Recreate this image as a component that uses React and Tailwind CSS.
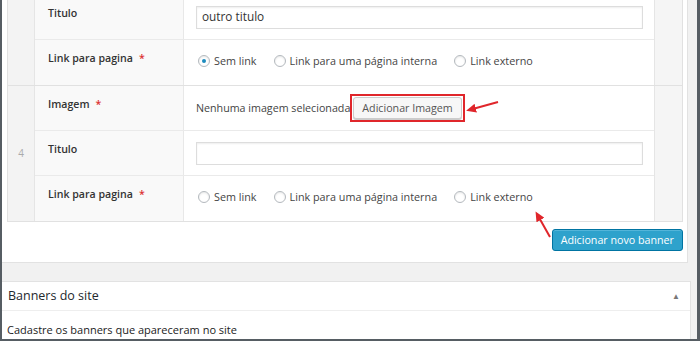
import React from 'react';

const FONT = "font-['Open_Sans',sans-serif]";

function Radio({ checked, label }) {
  return (
    <label className="flex items-center gap-[4px] text-[10.8px] text-[#444]">
      <span className="w-[12px] h-[12px] rounded-full border border-[#b4b9be] bg-white shadow-[inset_0_1px_2px_rgba(0,0,0,0.1)] flex items-center justify-center">
        {checked && <span className="w-[4px] h-[4px] rounded-full bg-[#1e8cbe]" />}
      </span>
      {label}
    </label>
  );
}

function LinkRadios({ first }) {
  return (
    <div className="flex items-center gap-[17px] pl-[14px] mt-[-3px]">
      <Radio checked={first} label="Sem link" />
      <Radio label="Link para uma página interna" />
      <Radio label="Link externo" />
    </div>
  );
}

function Row({ label, required, last, children }) {
  return (
    <div className={`flex h-[45px] ${last ? '' : 'border-b border-[#eaeaea]'}`}>
      <div className="w-[149px] shrink-0 bg-[#f9f9f9] border-r border-[#e8e8e8] pl-[13px] pt-[11px] text-[10.6px] font-semibold text-[#333]">
        {label}
        {required && <span className="text-[#dc3232] ml-[6px]">*</span>}
      </div>
      <div className="flex-1 flex items-center">{children}</div>
    </div>
  );
}

function Input({ value }) {
  return (
    <div className="ml-[12px] w-[447px] h-[23px] border border-[#dddddd] shadow-[inset_0_1px_2px_rgba(0,0,0,0.07)] bg-white flex items-center px-[5px] text-[11.8px] text-[#333]">
      {value}
    </div>
  );
}

function Group({ num, children }) {
  return (
    <div className="flex border-b border-[#e1e1e1]">
      <div className="w-[27px] shrink-0 bg-[#f3f3f3] border-r border-[#e5e5e5] flex items-center justify-center text-[10px] text-[#aaa]">
        {num}
      </div>
      <div className="flex-1">{children}</div>
      <div className="w-[28px] shrink-0 bg-[#f5f5f5] border-l border-[#e5e5e5]" />
    </div>
  );
}

export default function App() {
  return (
    <div className={`w-[700px] h-[343px] bg-white overflow-hidden ${FONT}`}>
      <div className="relative h-[341px] border-l-2 border-r-[3px] border-b-2 border-[#565d63] bg-[#f1f1f1] flex flex-col overflow-hidden">
        {/* top panel */}
        <div className="h-[263px] shrink-0 mr-[9px] bg-white border-r border-b border-[#e2e2e2] pl-[5px] overflow-hidden">
          <div className="mt-[-5px] w-[676px] border-l border-r border-[#e1e1e1]">
            <Group num="">
              <Row label="Titulo">
                <Input value="outro titulo" />
              </Row>
              <Row label="Link para pagina" required last>
                <LinkRadios first />
              </Row>
            </Group>
            <Group num="4">
              <Row label="Imagem" required>
                <div className="flex items-center pl-[12px] text-[10.7px] text-[#444]">
                  <span>Nenhuma imagem selecionada</span>
                  <span className="border-2 border-[#e0262b] p-[1px]">
                    <span className="block h-[22px] px-[8px] leading-[20px] bg-[#f7f7f7] border border-[#cccccc] rounded-[3px] text-[10.7px] text-[#555] shadow-[0_1px_0_#ccc]">
                      Adicionar Imagem
                    </span>
                  </span>
                </div>
              </Row>
              <Row label="Titulo">
                <Input value="" />
              </Row>
              <Row label="Link para pagina" required last>
                <LinkRadios />
              </Row>
            </Group>
          </div>
          <div className="w-[676px] flex justify-end mt-[7px]">
            <button className="h-[22px] px-[8px] bg-[#2ea2cc] border border-[#0074a2] rounded-[3px] text-[10.7px] text-white shadow-[inset_0_1px_0_rgba(120,200,230,0.5)]">
              Adicionar novo banner
            </button>
          </div>
        </div>

        {/* second box */}
        <div className="mt-[18px] mr-[6px] bg-white border-t border-r border-[#e2e2e2] flex-1">
          <div className="h-[29px] border-b border-[#eeeeee] flex items-center justify-between pl-[6px] pr-[10px]">
            <span className="text-[12.5px] text-[#23282d]">Banners do site</span>
            <span className="text-[8px] text-[#777]">▲</span>
          </div>
          <div className="pl-[5px] pt-[11px] text-[11px] text-[#222]">
            Cadastre os banners que apareceram no site
          </div>
        </div>

        {/* annotation arrows */}
        <svg className="absolute left-0 top-0 pointer-events-none" width="700" height="343">
          <defs>
            <marker id="ah" markerWidth="10" markerHeight="9" refX="7" refY="4.5" orient="auto" markerUnits="userSpaceOnUse">
              <path d="M0,0 L10,4.5 L0,9 z" fill="#e0262b" />
            </marker>
          </defs>
          <line x1="496" y1="102" x2="467" y2="110" stroke="#e0262b" strokeWidth="2" markerEnd="url(#ah)" />
          <line x1="548" y1="237" x2="535" y2="214" stroke="#e0262b" strokeWidth="2" markerEnd="url(#ah)" />
        </svg>
      </div>
    </div>
  );
}
